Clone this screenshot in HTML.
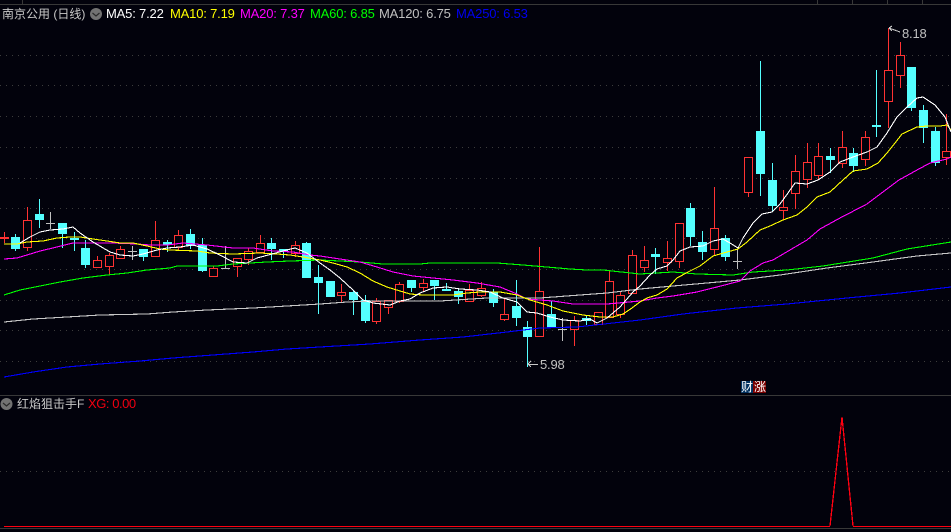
<!DOCTYPE html>
<html><head><meta charset="utf-8"><style>
html,body{margin:0;padding:0;background:#02020c;width:951px;height:532px;overflow:hidden}
#c{position:relative;width:951px;height:532px;overflow:hidden;font-family:"Liberation Sans","Noto Sans CJK SC",sans-serif}
svg{position:absolute;left:0;top:0}
.t{position:absolute;white-space:nowrap;font-size:13px;line-height:16px;letter-spacing:-.18px}
.z{font-size:12px;letter-spacing:0}
</style></head><body><div id="c">
<svg width="951" height="532" viewBox="0 0 951 532" shape-rendering="crispEdges" fill="none">
<path d="M0 4.5H951M22.5 0V4M817.5 0V4M852.5 0V4M887.5 0V4M922.5 0V4M0 395.5H951M0 528.5H951" stroke="#383838"/>
<path d="M0 55.5H951M0 85.5H951M0 116.5H951M0 147.5H951M0 178.5H951M0 208.5H951M0 238.5H951M0 269.5H951M0 300.5H951M0 330.5H951M0 361.5H951M0 471.5H951" stroke="#3c3c3c" stroke-dasharray="1 5"/>
<!-- cyan candles -->
<path stroke="#54ffff" stroke-width="1.3" d="M15.5 234V251M39.5 199V228M62.5 223V248M74.5 232V251M85.5 240V268M143.5 249V261M167.5 240V252M190.5 229V249M202.5 238V272M271.5 238V260M283.5 249V258M306.5 242V278M318.5 265V314M330.5 281V297M353.5 290V315M365.5 295V323M411.5 280V292M434.5 280V300M446.5 283V291M458.5 289V304M493.5 289V307M516.5 280V326M527.5 321V367M551.5 301V328M586.5 316V325M655.5 248V274M690.5 203V246M702.5 231V260M725.5 235V261M760.5 61V196M772.5 163V211M830.5 148V173M853.5 148V172M876.5 70V137M911.5 67V111M923.5 105V143M935.5 127V166"/>
<path fill="#54ffff" d="M11 237h9v12h-9zM35 214h9v6h-9zM58 223h9v11h-9zM70 238h9v2h-9zM81 248h9v17h-9zM139 249h9v8h-9zM163 242h9v3h-9zM186 234h9v12h-9zM198 245h9v26h-9zM267 243h9v6h-9zM279 249h9v3h-9zM302 243h9v35h-9zM314 277h9v6h-9zM326 281h9v16h-9zM349 292h9v8h-9zM361 300h9v21h-9zM407 280h9v8h-9zM430 280h9v6h-9zM442 289h9v2h-9zM454 291h9v6h-9zM489 292h9v11h-9zM512 306h9v12h-9zM523 327h9v10h-9zM547 314h9v13h-9zM582 318h9v3h-9zM651 254h9v3h-9zM686 208h9v29h-9zM698 242h9v10h-9zM721 238h9v19h-9zM756 131h9v43h-9zM768 180h9v26h-9zM826 156h9v4h-9zM849 153h9v13h-9zM872 125h9v2h-9zM907 67h9v41h-9zM919 110h9v18h-9zM931 131h9v32h-9z"/>
<!-- red candles -->
<path stroke="#ff3232" stroke-width="1.3" d="M4.5 232V243M0 237.5H9M0 238.5H9M27.5 207V251M97.5 256V267M109.5 253V274M120.5 246V258M155.5 221V257M178.5 230V250M213.5 266V276M237.5 258V277M248.5 248V265M260.5 235V252M295.5 241V257M341.5 284V303M376.5 298V324M388.5 301V314M399.5 282V303M423.5 279V292M469.5 284V301M481.5 282V297M504.5 299V321M539.5 247V336M574.5 316V346M598.5 312V325M609.5 270V317M620.5 292V318M632.5 250V293M644.5 246V272M667.5 241V271M679.5 223V268M714.5 187V256M748.5 157V197M783.5 190V220M795.5 155V209M807.5 143V188M818.5 143V180M842.5 131V168M865.5 131V166M888.5 28V128M900.5 42V88M946.5 114V165"/>
<path stroke="#ff3232" stroke-width="1.3" fill="#02020c" d="M23.5 220.5h8v27h-8zM93.5 260.5h8v7h-8zM105.5 255.5h8v11h-8zM116.5 249.5h8v9h-8zM151.5 240.5h8v16h-8zM174.5 235.5h8v12h-8zM209.5 268.5h8v8h-8zM233.5 258.5h8v8h-8zM244.5 251.5h8v8h-8zM256.5 243.5h8v9h-8zM291.5 245.5h8v8h-8zM337.5 292.5h8v3h-8zM372.5 301.5h8v20h-8zM384.5 300.5h8v7h-8zM395.5 284.5h8v17h-8zM419.5 283.5h8v4h-8zM465.5 290.5h8v11h-8zM477.5 288.5h8v7h-8zM500.5 314.5h8v5h-8zM535.5 291.5h8v45h-8zM570.5 320.5h8v9h-8zM594.5 312.5h8v12h-8zM605.5 281.5h8v36h-8zM616.5 295.5h8v19h-8zM628.5 255.5h8v38h-8zM640.5 260.5h8v7h-8zM663.5 258.5h8v4h-8zM675.5 223.5h8v38h-8zM710.5 228.5h8v21h-8zM744.5 157.5h8v35h-8zM779.5 207.5h8v3h-8zM791.5 171.5h8v22h-8zM803.5 162.5h8v17h-8zM814.5 156.5h8v19h-8zM838.5 147.5h8v16h-8zM861.5 137.5h8v22h-8zM884.5 70.5h8v31h-8zM896.5 55.5h8v20h-8zM942.5 151.5h8v6h-8z"/>
<!-- doji -->
<path stroke="#c0c0c0" stroke-width="1.3" d="M50.5 212V229M46 223.5H55M132.5 246V260M128 251.5H137M225.5 246V269M221 268.5H230M562.5 318V341M558 329.5H567M737.5 249V269M733 261.5H742"/>
<g stroke-width="1.1">
<!-- MA250 -->
<polyline stroke="#0000ff" points="4,377 33,372 67,367 100,364 140,361 173,358 213,355 253,352 287,349 320,347 370,344 420,340 463,337 507,332 540,328 577,327 613,323 640,320 683,314 737,308 787,304 847,298 900,293 951,287"/>
<!-- MA120 -->
<polyline stroke="#c8c8c8" points="4,322 33,319 67,317 100,315 147,314 173,312 207,310 253,308 287,306 320,304 347,302 373,301 440,301 487,298 540,298 580,295 607,293 640,289 673,286 707,283 740,280 780,275 827,268 873,262 917,256 951,253"/>
<!-- MA60 -->
<polyline stroke="#00ff00" points="4,295 20,290 40,286 60,282 83,278 107,275 127,273 147,270 170,268 177,266 217,266 233,264 267,262 290,261 320,260 360,262 383,264 420,264 430,263 497,263 523,265 570,269 587,270 603,270 640,274 673,272 697,274 733,275 753,272 787,270 823,266 873,258 907,249 951,242"/>
<!-- MA20 -->
<polyline stroke="#ff00ff" points="4,259 17,258 27,255 40,251 57,247 73,243 93,243 113,243 137,244 150,245 167,245 183,243 207,245 233,248 253,248 273,251 293,252 310,255 320,256 340,259 360,262 377,267 393,272 413,276 433,278 453,280 477,283 500,287 517,294 527,299 553,301 573,304 607,304 640,301 657,298 673,296 697,292 717,287 740,281 750,271 763,263 773,260 790,250 807,240 820,229 840,218 867,204 883,192 899,180 917,170 930,163 947,159 951,157"/>
<!-- MA10 -->
<polyline stroke="#ffff00" points="4,244 17,244 27,242 43,241 57,238 70,237 80,237 93,239 107,241 120,243 133,243 147,246 160,249 170,250 197,251 210,253 233,254 260,253 277,254 290,255 303,257 320,260 333,263 347,267 360,273 373,281 387,287 400,291 410,294 423,295 453,295 467,293 480,292 500,292 517,295 530,300 547,305 563,311 583,315 600,317 613,317 623,314 632,308 640,302 647,298 657,295 667,289 677,278 688,272 700,266 713,256 727,252 738,249 747,242 760,230 770,226 783,220 797,215 807,207 817,197 830,192 843,180 853,171 867,169 878,163 887,153 895,143 902,134 917,127 927,126 940,126 947,125 951,130"/>
<!-- MA5 -->
<polyline stroke="#ffffff" points="20,243 30,237 40,232 50,230 63,229 73,227 80,233 93,242 110,252 120,255 133,256 143,254 157,250 167,248 180,247 193,245 207,249 220,255 233,262 247,263 257,258 272,254 283,251 295,248 307,253 320,263 330,270 340,278 353,290 363,300 373,303 390,305 400,301 410,299 420,293 433,288 447,287 460,289 477,290 490,292 503,298 517,302 527,312 537,313 550,317 563,320 580,321 590,319 597,323 607,318 620,307 633,292 640,286 650,275 657,269 667,266 673,260 680,251 690,247 703,246 713,241 723,239 730,243 738,248 743,238 753,223 762,214 772,212 780,204 788,193 795,183 807,184 818,180 830,172 840,162 853,157 867,152 877,147 887,133 897,117 907,107 917,98 923,97 935,105 945,117 951,132"/>
</g>
<!-- price callouts -->
<path stroke="#c8c8c8" d="M889 28L900 32M889 28L892 26M889 28L892 31"/>
<path stroke="#c8c8c8" d="M528 364.5H538M528 364L531 361M528 364L531 367"/>
<!-- indicator line -->
<path stroke="#ff0010" stroke-width="1.2" d="M4 526.5H830M853 526.5H951"/>
<polyline stroke="#ff0010" stroke-width="1.3" points="830,526 842,417 853,526"/>
<rect x="741" y="381" width="12" height="12" fill="#00305f"/>
<rect x="753" y="381" width="13" height="12" fill="#7a0000"/>
<g shape-rendering="auto">
<circle cx="96" cy="14" r="6" fill="#727272"/>
<path d="M92.5 13l3.5 3 3.5-3" stroke="#2a2a2a" stroke-width="1.2"/>
<circle cx="6.5" cy="404" r="6" fill="#727272"/>
<path d="M3 403l3.5 3 3.5-3" stroke="#2a2a2a" stroke-width="1.2"/>
</g>
</svg>
<div class="t z" style="left:2px;top:6px;color:#c8c8c8">南京公用 (日线)</div>
<div class="t" style="left:106px;top:6px;color:#fff">MA5: 7.22</div>
<div class="t" style="left:170px;top:6px;color:#ff0">MA10: 7.19</div>
<div class="t" style="left:240px;top:6px;color:#f0f">MA20: 7.37</div>
<div class="t" style="left:310px;top:6px;color:#0f0">MA60: 6.85</div>
<div class="t" style="left:379px;top:6px;color:#c0c0c0">MA120: 6.75</div>
<div class="t" style="left:456px;top:6px;color:#0000f0">MA250: 6.53</div>
<div class="t" style="left:902px;top:26px;color:#c0c0c0">8.18</div>
<div class="t" style="left:540px;top:357px;color:#c0c0c0">5.98</div>
<div class="t z" style="left:741px;top:379px;color:#fff">财</div>
<div class="t z" style="left:754px;top:379px;color:#fff">涨</div>
<div class="t z" style="left:17px;top:396px;color:#c8c8c8">红焰狙击手F</div>
<div class="t" style="left:88px;top:396px;color:#f00010;letter-spacing:-.45px">XG: 0.00</div>
</div></body></html>
